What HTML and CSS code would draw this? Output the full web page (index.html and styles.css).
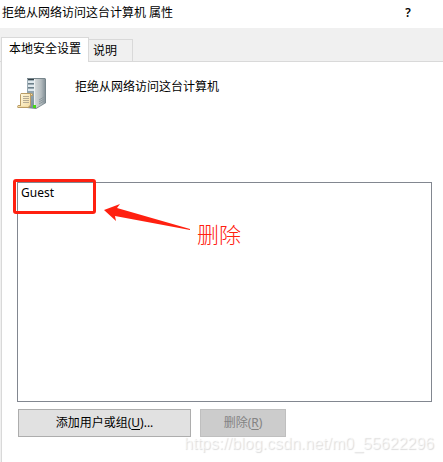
FILE: index.html
```
<!DOCTYPE html>
<html lang="zh-CN">
<head>
  <meta charset="UTF-8" />
  <meta name="viewport" content="width=device-width, initial-scale=1.0" />
  <title>拒绝从网络访问这台计算机 属性</title>
  <link rel="stylesheet" href="styles.css">
</head>
<body>
  <header class="titlebar">
    <h1>拒绝从网络访问这台计算机 属性</h1>
    <button class="help" type="button">?</button>
  </header>

  <nav class="tabs" role="tablist">
    <button class="tab active" type="button" role="tab" aria-selected="true">本地安全设置</button>
    <button class="tab" type="button" role="tab" aria-selected="false">说明</button>
  </nav>

  <main class="panel">
    <div class="policy">
      <svg class="server-icon" width="32" height="32" viewBox="0 0 32 32" aria-hidden="true">
        <defs>
          <linearGradient id="side" x1="0" y1="0" x2="1" y2="0">
            <stop offset="0" stop-color="#d3d8da" />
            <stop offset="0.6" stop-color="#b4bcbf" />
            <stop offset="1" stop-color="#87939a" />
          </linearGradient>
          <linearGradient id="front" x1="0" y1="0" x2="0" y2="1">
            <stop offset="0" stop-color="#a3b2ba" />
            <stop offset="1" stop-color="#7c929e" />
          </linearGradient>
          <linearGradient id="paper" x1="0" y1="0" x2="1" y2="1">
            <stop offset="0" stop-color="#fff6d8" />
            <stop offset="1" stop-color="#f3dda6" />
          </linearGradient>
        </defs>
        <path d="M10 1 H28 L29 2 V26 L19 32 L10 31 Z" fill="#78868c" />
        <path d="M18 2 H28 V26 L19 31 H18 Z" fill="url(#side)" />
        <path d="M10 2 H17 V31 L10 30 Z" fill="url(#front)" />
        <path d="M11 2 H17 V3 H11 Z" fill="#35434b" />
        <path d="M11 4 H17 V6 H11 Z M11 8 H17 V10 H11 Z M11 12 H17 V14 H11 Z" fill="#dfe8ed" />
        <path d="M11 6 H17 V7 H11 Z M11 10 H17 V11 H11 Z" fill="#6d7f89" />
        <path d="M17 2 H18 V31 H17 Z" fill="#edf0f1" />
        <path d="M22 23 L27 20 M22 25 L27 22 M22 27 L27 24" stroke="#8c989d" />
        <rect x="16" y="28" width="3" height="3" fill="#45d716" />
        <path d="M4 16 H14 L16 17 V19 H14 V29 L12 31 H1 L0 30 L1 28 H3 V18 Z" fill="#b99c65" />
        <path d="M4 17 H13 V28 L11 30 H4 Z" fill="url(#paper)" />
        <path d="M14 17 H15 V18 H14 Z" fill="#f3dda6" />
        <path d="M1 29 H10 L11 30 H1 Z" fill="#f3dda6" />
        <path d="M6 19 H12 V20 H6 Z M6 21 H12 V22 H6 Z M6 23 H12 V24 H6 Z M6 25 H12 V26 H6 Z" fill="#b5ab94" />
      </svg>
      <label for="accounts">拒绝从网络访问这台计算机</label>
    </div>

    <div class="list">
      <select id="accounts" class="accounts" size="12">
        <option>Guest</option>
      </select>
      <div class="mark"></div>
      <svg class="arrow" width="88" height="28" viewBox="0 0 88 28" aria-hidden="true">
        <path d="M0 6 L16 0 L13 4 L86 25 V26 L11 12 L12 17 Z" fill="#ff2010" />
      </svg>
      <span class="note">删除</span>
    </div>

    <div class="actions">
      <button class="btn add" type="button">添加用户或组(<u>U</u>)...</button>
      <button class="btn remove" type="button" disabled>删除(<u>R</u>)</button>
    </div>
  </main>

  <div class="watermark">https://blog.csdn.net/m0_55622296</div>
</body>
</html>
```

FILE: styles.css
```
* {
  box-sizing: border-box;
}
body {
  margin: 0;
  min-height: 100vh;
  display: flex;
  flex-direction: column;
  position: relative;
  background-color: #f0f0f0;
  color: #000;
  font-family: 'Noto Sans', 'Noto Sans CJK SC', sans-serif;
  font-size: 12px;
  line-height: 18px;
}
button,
select {
  font: inherit;
  color: inherit;
}
.titlebar {
  display: flex;
  justify-content: space-between;
  align-items: center;
  height: 28px;
  padding: 0 30px 2px 2px;
  background-color: #fff;
}
.titlebar h1 {
  margin: 0;
  font-size: 12px;
  font-weight: 400;
}
.help {
  padding: 0;
  width: 10px;
  border: none;
  background: none;
  font-weight: 600;
}
.tabs {
  display: flex;
  align-items: flex-end;
  height: 34px;
  padding-left: 1px;
  border-bottom: 1px solid #d9d9d9;
}
.tab {
  height: 22px;
  padding: 0 15px 0 4px;
  border: 1px solid #d9d9d9;
  border-left: none;
  border-bottom: none;
  background-color: #f0f0f0;
  white-space: nowrap;
}
.tab.active {
  height: 25px;
  margin-bottom: -1px;
  padding: 0 7px 2px;
  border-left: 1px solid #d9d9d9;
  background-color: #fff;
}
.panel {
  flex: 1;
  display: flex;
  flex-direction: column;
  margin-left: 1px;
  padding: 15px 11px 26px 15px;
  border-left: 1px solid #d9d9d9;
  background-color: #fff;
}
.policy {
  display: flex;
  gap: 26px;
  height: 105px;
}
.server-icon {
  flex: none;
}
.policy label {
  padding-top: 1px;
}
.list {
  flex: 1;
  display: flex;
  position: relative;
}
.accounts {
  flex: 1;
  appearance: none;
  margin: 0;
  padding: 1px;
  border: 1px solid #828790;
  border-radius: 0;
  outline: none;
  background-color: #fff;
  overflow: auto;
}
.accounts option {
  min-height: 18px;
  padding: 0 2px;
}
.mark {
  position: absolute;
  top: -3px;
  left: -4px;
  width: 83px;
  height: 35px;
  border: 3px solid #ff2010;
  border-radius: 3px;
  pointer-events: none;
}
.arrow {
  position: absolute;
  top: 22px;
  left: 87px;
}
.note {
  position: absolute;
  top: 37px;
  left: 180px;
  color: #ff2010;
  font-size: 22px;
  font-weight: 300;
  line-height: 30px;
}
.actions {
  display: flex;
  gap: 9px;
  margin-top: 7px;
  padding-left: 1px;
}
.btn {
  height: 28px;
  padding: 0;
  border: 1px solid #adadad;
  background-color: #e1e1e1;
}
.btn.add {
  width: 173px;
}
.btn.remove {
  width: 86px;
  border-color: #bfbfbf;
  background-color: #ccc;
  color: #838383;
}
.btn u {
  text-underline-offset: 2px;
}
.watermark {
  position: absolute;
  right: 9px;
  bottom: 10px;
  color: rgba(255, 255, 255, 0.6);
  font-family: 'Liberation Sans', sans-serif;
  font-size: 16px;
  text-shadow: 1px 1px 1px rgba(0, 0, 0, 0.14);
  pointer-events: none;
}
```
